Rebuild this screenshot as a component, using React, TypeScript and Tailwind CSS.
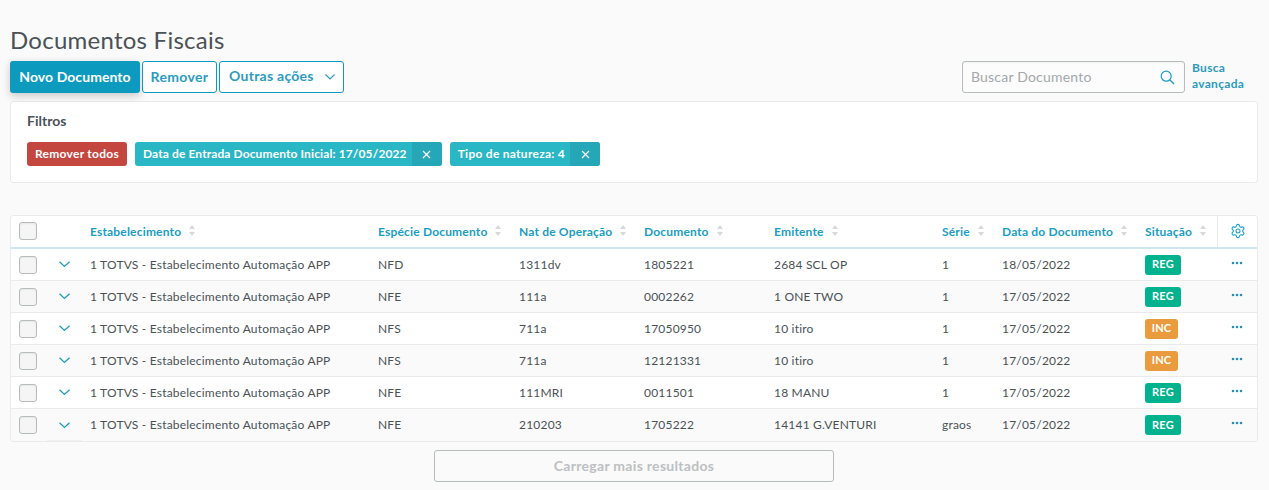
import React from "react";
import { Settings } from "lucide-react";

const font = { fontFamily: '"Lato", "Liberation Sans", sans-serif' };
const cols = "grid grid-cols-[79px_288px_141px_125px_130px_168px_60px_143px_72px_40px]";

const rows = [
  ["NFD", "1311dv", "1805221", "2684 SCL OP", "1", "18/05/2022", "REG"],
  ["NFE", "111a", "0002262", "1 ONE TWO", "1", "17/05/2022", "REG"],
  ["NFS", "711a", "17050950", "10 itiro", "1", "17/05/2022", "INC"],
  ["NFS", "711a", "12121331", "10 itiro", "1", "17/05/2022", "INC"],
  ["NFE", "111MRI", "0011501", "18 MANU", "1", "17/05/2022", "REG"],
  ["NFE", "210203", "1705222", "14141 G.VENTURI", "graos", "17/05/2022", "REG"],
];

function Check() {
  return <span className="block w-[18px] h-[18px] rounded-[3px] border border-[#b6bbbd] bg-[#f5f5f5] shadow-[inset_0_1px_2px_rgba(0,0,0,0.06)]" />;
}

function Sort() {
  return (
    <svg width="6" height="12" viewBox="0 0 6 12" className="ml-[8px] -mt-[3px] shrink-0">
      <path d="M3 0 L6 4 H0 Z M0 7 H6 L3 11 Z" fill="#d6d9da" />
    </svg>
  );
}

function Head({ label }: { label: string }) {
  return (
    <div className="flex items-center h-full pt-[2px] text-[12px] font-bold text-[#1a9dc2] tracking-[0.18px]">
      <span>{label}</span>
      <Sort />
    </div>
  );
}

function Chip({ label, track }: { label: string; track: string }) {
  return (
    <div className="flex h-6 rounded-[3px] overflow-hidden bg-[#29b6c5] text-white text-[12px] font-bold">
      <span className={"flex items-center pl-2 pr-[5px] " + track}>{label}</span>
      <span className="flex items-center justify-center w-[30px] bg-[#25a7b7]">
        <svg width="9" height="9" viewBox="0 0 9 9"><path d="M1 1 L8 8 M8 1 L1 8" stroke="#fff" strokeWidth="1.2" fill="none" /></svg>
      </span>
    </div>
  );
}

export default function App() {
  return (
    <div style={font} className="w-[1269px] h-[490px] overflow-hidden bg-[#fafafa] pl-[10px] pr-[11px] text-[#3f4a50]">
      <h1 className="h-[61px] pt-[24px] text-[24px] leading-[32px] text-[#4a5257] tracking-[0.25px]">Documentos Fiscais</h1>

      <div className="flex items-center h-8">
        <button className="w-[130px] h-8 pb-[2px] rounded-[3px] bg-[#0c9abe] text-white text-[14px] font-bold tracking-[0.07px] shadow-[0_3px_8px_rgba(0,0,0,0.2)]">Novo Documento</button>
        <button className="ml-[2px] w-[75px] h-8 pb-[2px] rounded-[3px] border border-[#0c9abe] bg-white text-[#2c9bbd] text-[14px] font-bold tracking-[0.35px]">Remover</button>
        <button className="ml-[2px] w-[125px] h-8 rounded-[3px] border border-[#0c9abe] bg-white text-[#2c9bbd] text-[14px] font-bold tracking-[0.27px] flex items-center pl-[9px]">
          <span className="-mt-[4px]">Outras ações</span>
          <svg width="10" height="6" viewBox="0 0 10 6" className="ml-[11px]"><path d="M0.5 0.5 L5 5 L9.5 0.5" stroke="#2c9bbd" strokeWidth="1.1" fill="none" /></svg>
        </button>
        <div className="ml-auto mr-[7px] flex items-center w-[223px] h-8 rounded-[3px] border border-[#b6bbbd] bg-[#fcfcfc] pl-[8px] pr-[9px] shadow-[inset_0_1px_2px_rgba(0,0,0,0.05)]">
          <span className="flex-1 -mt-[2px] text-[14px] text-[#a3a8ab] tracking-[0.2px]">Buscar Documento</span>
          <svg width="15" height="15" viewBox="0 0 15 15"><circle cx="6.2" cy="6.2" r="5" stroke="#1a9dc2" strokeWidth="1.2" fill="none" /><path d="M9.8 9.8 L14 14" stroke="#1a9dc2" strokeWidth="1.3" /></svg>
        </div>
        <div className="w-[66px] -mt-[2px] text-[12px] leading-[16px] font-bold text-[#2c9bbd] tracking-[0.3px]">Busca<br />avançada</div>
      </div>

      <section className="mt-2 h-[82px] rounded-[3px] border border-[#eaeaea] bg-white pl-4 pt-[10px]">
        <div className="text-[14px] leading-[18px] font-bold text-[#4a5257]">Filtros</div>
        <div className="flex gap-2 mt-[12px]">
          <button className="w-[100px] h-6 rounded-[3px] bg-[#c4473f] text-white text-[12px] font-bold tracking-[0.28px]">Remover todos</button>
          <Chip label="Data de Entrada Documento Inicial: 17/05/2022" track="tracking-[0.11px]" />
          <Chip label="Tipo de natureza: 4" track="tracking-[0.27px]" />
        </div>
      </section>

      <section className="relative mt-8 rounded-[3px] border border-[#eaeaea] bg-white overflow-hidden">
        <div className={cols + " h-[32px] border-b-2 border-[#cfe8f0] -mt-[1px] box-content"}>
          <div className="flex items-center pl-2"><Check /></div>
          <Head label="Estabelecimento" />
          <Head label="Espécie Documento" />
          <Head label="Nat de Operação" />
          <Head label="Documento" />
          <Head label="Emitente" />
          <Head label="Série" />
          <Head label="Data do Documento" />
          <Head label="Situação" />
          <div className="flex items-center justify-center border-l border-[#eaeaea]">
            <Settings size={16} color="#1a9dc2" strokeWidth={1.6} />
          </div>
        </div>
        {rows.map((r, i) => (
          <div key={i} className={cols + " h-[32px] items-center text-[12px] tracking-[0.2px] text-[#4a5257] " + (i % 2 ? "bg-[#fafafa]" : "bg-white") + (i < 5 ? " border-b border-[#eaeaea]" : "")}>
            <div className="flex items-center pl-2">
              <Check />
              <svg width="11" height="7" viewBox="0 0 11 7" className="ml-[22px]"><path d="M0.5 0.8 L5.5 5.5 L10.5 0.8" stroke="#1a9dc2" strokeWidth="1.2" fill="none" /></svg>
            </div>
            <div>1 TOTVS - Estabelecimento Automação APP</div>
            <div>{r[0]}</div>
            <div>{r[1]}</div>
            <div>{r[2]}</div>
            <div>{r[3]}</div>
            <div>{r[4]}</div>
            <div>{r[5]}</div>
            <div>
              <span className={"flex items-center justify-center h-5 rounded-[3px] text-white text-[11px] font-bold " + (r[6] === "REG" ? "w-9 bg-[#00b28e]" : "w-[33px] bg-[#ea9b3e]")}>{r[6]}</span>
            </div>
            <div className="flex justify-center -mt-[4px]">
              <svg width="12" height="4" viewBox="0 0 12 4"><circle cx="2" cy="2" r="1.3" fill="#2c8fb0" /><circle cx="6" cy="2" r="1.3" fill="#2c8fb0" /><circle cx="10" cy="2" r="1.3" fill="#2c8fb0" /></svg>
            </div>
          </div>
        ))}
        <span className="absolute left-[36px] bottom-0 w-[35px] h-[1px] bg-[#f1f1f1]" />
      </section>

      <div className="flex justify-center mt-2">
        <button className="w-[400px] h-8 pb-[1px] rounded-[3px] border border-[#b6bbbd] text-[14px] font-bold text-[#bcc0c2] tracking-[0.3px]">Carregar mais resultados</button>
      </div>
    </div>
  );
}
